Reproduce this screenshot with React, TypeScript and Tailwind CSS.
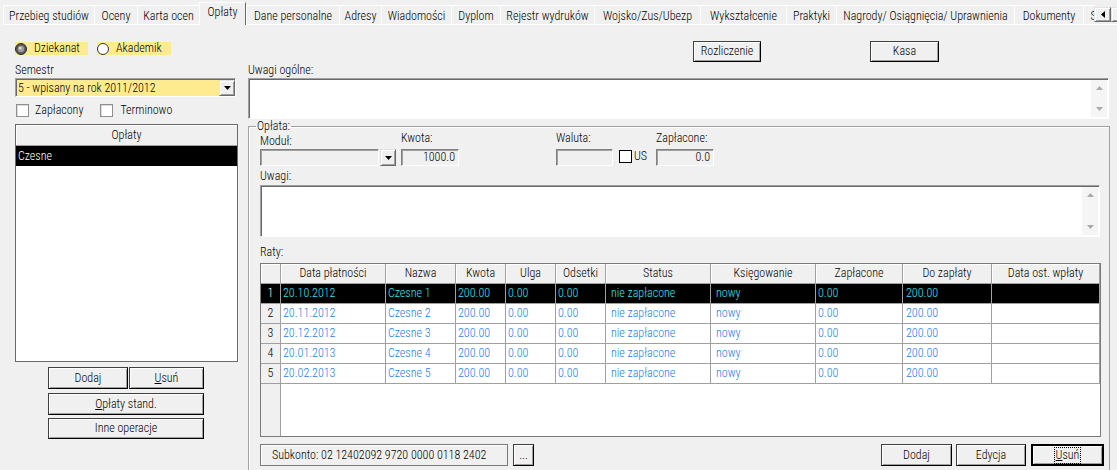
import React from 'react';

type Tab = { label: string; w: string; active?: boolean };

const tabs: Tab[] = [
  { label: 'Przebieg studiów', w: 'w-[91px]' },
  { label: 'Oceny', w: 'w-[43px]' },
  { label: 'Karta ocen', w: 'w-[62px]' },
  { label: 'Opłaty', w: 'w-[47px]', active: true },
  { label: 'Dane personalne', w: 'w-[93px]' },
  { label: 'Adresy', w: 'w-[42px]' },
  { label: 'Wiadomości', w: 'w-[70px]' },
  { label: 'Dyplom', w: 'w-[49px]' },
  { label: 'Rejestr wydruków', w: 'w-[94px]' },
  { label: 'Wojsko/Zus/Ubezp', w: 'w-[106px]' },
  { label: 'Wykształcenie', w: 'w-[86px]' },
  { label: 'Praktyki', w: 'w-[50px]' },
  { label: 'Nagrody/ Osiągnięcia/ Uprawnienia', w: 'w-[178px]' },
  { label: 'Dokumenty', w: 'w-[69px]' },
  { label: 'Stypendia', w: 'w-[60px]' },
];

type Col = { label: string; w: string; pad: string };

const cols: Col[] = [
  { label: 'Data płatności', w: 'w-[105px]', pad: 'pl-[2px]' },
  { label: 'Nazwa', w: 'w-[70px]', pad: 'pl-[2px]' },
  { label: 'Kwota', w: 'w-[50px]', pad: 'pl-[2px]' },
  { label: 'Ulga', w: 'w-[50px]', pad: 'pl-[2px]' },
  { label: 'Odsetki', w: 'w-[50px]', pad: 'pl-[2px]' },
  { label: 'Status', w: 'w-[105px]', pad: 'pl-[5px]' },
  { label: 'Księgowanie', w: 'w-[105px]', pad: 'pl-[5px]' },
  { label: 'Zapłacone', w: 'w-[87px]', pad: 'pl-[2px]' },
  { label: 'Do zapłaty', w: 'w-[89px]', pad: 'pl-[3px]' },
  { label: 'Data ost. wpłaty', w: 'w-[108px]', pad: 'pl-[2px]' },
];

const dates = ['20.10.2012', '20.11.2012', '20.12.2012', '20.01.2013', '20.02.2013'];

const rows = dates.map((d, i) => [
  d,
  'Czesne ' + (i + 1),
  '200.00',
  '0.00',
  '0.00',
  'nie zapłacone',
  'nowy',
  '0.00',
  '200.00',
  '',
]);

function DownArrow({ color = '#000' }: { color?: string }) {
  return (
    <svg width="7" height="4" viewBox="0 0 7 4">
      <path d="M0 0h7L3.5 4z" fill={color} />
    </svg>
  );
}

function UpArrow({ color = '#000' }: { color?: string }) {
  return (
    <svg width="7" height="4" viewBox="0 0 7 4">
      <path d="M0 4h7L3.5 0z" fill={color} />
    </svg>
  );
}

function Btn({ className, children }: { className: string; children: React.ReactNode }) {
  return (
    <button
      className={`flex shrink-0 items-center justify-center whitespace-nowrap border border-[#404040] border-r-black border-b-black bg-[#f0f0f0] leading-[15px] shadow-[inset_1px_1px_0_#fff,inset_-1px_-1px_0_#a0a0a0] ${className}`}
    >
      {children}
    </button>
  );
}

function SmallBtn({ className, children }: { className: string; children: React.ReactNode }) {
  return (
    <div
      className={`flex shrink-0 items-center justify-center border border-t-[#e3e3e3] border-l-[#e3e3e3] border-r-[#696969] border-b-[#696969] bg-[#f0f0f0] shadow-[inset_1px_1px_0_#fff,inset_-1px_-1px_0_#a0a0a0] ${className}`}
    >
      {children}
    </div>
  );
}

function Memo({ className }: { className: string }) {
  return (
    <div
      className={`flex border border-t-[#a0a0a0] border-l-[#a0a0a0] border-r-white border-b-white bg-white shadow-[inset_1px_1px_0_#696969] ${className}`}
    >
      <div className="flex-1" />
      <div className="my-px mr-px flex w-[16px] flex-col justify-between bg-[#f5f5f5]">
        <div className="flex h-[16px] items-center justify-center">
          <UpArrow color="#ababab" />
        </div>
        <div className="flex h-[16px] items-center justify-center">
          <DownArrow color="#ababab" />
        </div>
      </div>
    </div>
  );
}

function Field({ className, children }: { className: string; children?: React.ReactNode }) {
  return (
    <div
      className={`flex h-[17px] items-center justify-end border border-t-[#808080] border-l-[#808080] border-r-white border-b-white bg-[#f0f0f0] pr-[3px] leading-[15px] shadow-[inset_1px_1px_0_#a0a0a0] ${className}`}
    >
      {children}
    </div>
  );
}

function Radio({ checked }: { checked?: boolean }) {
  return (
    <svg width="12" height="12" viewBox="0 0 12 12" className="shrink-0">
      {checked ? (
        <>
          <circle cx="6" cy="6" r="5.5" fill="#5a5a5a" stroke="#2a2a2a" />
          <circle cx="6" cy="6" r="3.2" fill="#9a9a9a" />
          <circle cx="5.2" cy="5.2" r="1.4" fill="#d8d8d8" />
        </>
      ) : (
        <circle cx="6" cy="6" r="5.5" fill="#fff" stroke="#333" />
      )}
    </svg>
  );
}

function CheckBox() {
  return <div className="h-[13px] w-[13px] shrink-0 border border-[#8f8f8f] bg-white shadow-[inset_1px_1px_0_#dcdcdc]" />;
}

function TabStrip() {
  return (
    <div className="flex h-[25px]">
      <div className="flex h-[25px] w-[1094px] shrink-0 items-end overflow-hidden pl-[3px]">
        {tabs.map((t) =>
          t.active ? (
            <div
              key={t.label}
              className={`${t.w} h-[23px] shrink-0 whitespace-nowrap border-t border-l border-white border-r border-r-[#696969] pt-[2px] text-center leading-[15px]`}
            >
              {t.label}
            </div>
          ) : (
            <div
              key={t.label}
              className={`${t.w} h-[20px] shrink-0 overflow-hidden whitespace-nowrap border-t border-l border-b border-white border-r-[#a0a0a0] pt-[3px] text-center leading-[15px]`}
            >
              {t.label}
            </div>
          ),
        )}
      </div>
      <div className="flex flex-1 items-start border-b border-white pt-[7px]">
        <SmallBtn className="h-[15px] w-[17px]">
          <svg width="4" height="7" viewBox="0 0 4 7">
            <path d="M4 0v7L0 3.5z" fill="#000" />
          </svg>
        </SmallBtn>
        <SmallBtn className="h-[15px] w-[17px]">
          <svg width="4" height="7" viewBox="0 0 4 7">
            <path d="M0 0v7L4 3.5z" fill="#000" />
          </svg>
        </SmallBtn>
      </div>
    </div>
  );
}

function LeftPanel() {
  return (
    <div className="w-[248px] shrink-0 pl-[15px] pt-[17px]">
      <div className="flex h-[13px] leading-[13px]">
        <div className="flex w-[73px] items-center bg-[#ffeb8f]">
          <Radio checked />
          <span className="ml-[7px]">Dziekanat</span>
        </div>
        <div className="ml-[9px] flex w-[74px] items-center bg-[#ffeb8f]">
          <Radio />
          <span className="ml-[7px]">Akademik</span>
        </div>
      </div>

      <div className="mt-[8px] leading-[15px]">Semestr</div>
      <div className="flex h-[19px] w-[221px] border border-t-[#a0a0a0] border-l-[#a0a0a0] border-r-white border-b-white shadow-[inset_1px_1px_0_#696969]">
        <div className="mt-px ml-px flex-1 bg-[#ffeb8f] pl-[1px] leading-[16px]">5 - wpisany na rok 2011/2012</div>
        <SmallBtn className="mt-px h-[16px] w-[16px]">
          <DownArrow />
        </SmallBtn>
      </div>

      <div className="mt-[7px] flex h-[13px] items-center leading-[15px]">
        <div className="ml-px flex items-center">
          <CheckBox />
          <span className="ml-[6px]">Zapłacony</span>
        </div>
        <div className="ml-[17px] flex items-center">
          <CheckBox />
          <span className="ml-[7px]">Terminowo</span>
        </div>
      </div>

      <div className="mt-[7px] flex h-[238px] w-[223px] flex-col border border-[#6a6a6a] bg-white">
        <div className="h-[21px] border-b border-[#a0a0a0] bg-[#f0f0f0] text-center leading-[20px] shadow-[inset_1px_1px_0_#fff]">
          Opłaty
        </div>
        <div className="h-[20px] bg-black pl-[2px] leading-[20px] text-white">Czesne</div>
      </div>

      <div className="mt-[5px] ml-[33px] flex flex-col">
        <div className="flex gap-[1px]">
          <Btn className="h-[22px] w-[80px]">Dodaj</Btn>
          <Btn className="h-[22px] w-[75px]">
            <span className="underline">U</span>suń
          </Btn>
        </div>
        <Btn className="mt-[4px] h-[22px] w-[156px]">
          <span className="underline">O</span>płaty stand.
        </Btn>
        <Btn className="mt-[3px] h-[21px] w-[156px]">Inne operacje</Btn>
      </div>
    </div>
  );
}

function RatyGrid() {
  return (
    <div className="flex h-[174px] w-[841px] flex-col border border-[#7b7b7b] bg-white">
      <div className="flex h-[20px] shrink-0 bg-[#f0f0f0]">
        <div className="w-[20px] shrink-0 border-r border-b border-[#a0a0a0] shadow-[inset_1px_1px_0_#fff]" />
        {cols.map((c) => (
          <div
            key={c.label}
            className={`${c.w} shrink-0 whitespace-nowrap border-r border-b border-[#a0a0a0] text-center leading-[18px] shadow-[inset_1px_1px_0_#fff]`}
          >
            {c.label}
          </div>
        ))}
      </div>
      {rows.map((r, i) => {
        const sel = i === 0;
        return (
          <div key={i} className={`flex h-[20px] shrink-0 leading-[18px] ${sel ? 'bg-black text-[#34e2f7]' : 'bg-white text-[#1682ef]'}`}>
            <div
              className={`w-[20px] shrink-0 border-r border-b border-[#a0a0a0] text-center ${sel ? 'bg-black text-white' : 'bg-[#f0f0f0] text-black'}`}
            >
              {i + 1}
            </div>
            {cols.map((c, j) => (
              <div key={c.label} className={`${c.w} ${c.pad} shrink-0 whitespace-nowrap border-r border-b border-[#a0a0a0]`}>
                {r[j]}
              </div>
            ))}
          </div>
        );
      })}
      <div className="flex flex-1">
        <div className="w-[20px] shrink-0 border-r border-[#a0a0a0] bg-[#f0f0f0]" />
        <div className="flex-1 bg-white" />
      </div>
    </div>
  );
}

function RightPanel() {
  return (
    <div className="w-[869px] shrink-0 pt-[16px]">
      <div className="flex h-[21px]">
        <Btn className="ml-[445px] h-[21px] w-[68px]">Rozliczenie</Btn>
        <Btn className="ml-[109px] h-[21px] w-[69px]">Kasa</Btn>
      </div>
      <div className="mt-px leading-[15px]">Uwagi ogólne:</div>
      <Memo className="h-[41px] w-[861px]" />

      <fieldset className="w-[862px] border border-[#a0a0a0] pb-[20px] shadow-[inset_1px_1px_0_#fff]">
        <legend className="ml-[7px] px-[1px] leading-[15px]">Opłata:</legend>
        <div className="pl-[11px]">
          <div className="flex h-[32px] items-end">
            <div className="flex flex-col">
              <div className="mb-px leading-[13px]">Moduł:</div>
              <div className="flex">
                <Field className="w-[119px]" />
                <SmallBtn className="ml-px h-[17px] w-[16px]">
                  <DownArrow />
                </SmallBtn>
              </div>
            </div>
            <div className="ml-[5px] flex flex-col">
              <div className="mb-[4px] leading-[13px]">Kwota:</div>
              <Field className="w-[58px]">1000.0</Field>
            </div>
            <div className="ml-[97px] flex flex-col">
              <div className="mb-[4px] leading-[13px]">Waluta:</div>
              <Field className="w-[57px]" />
            </div>
            <div className="ml-[6px] flex h-[17px] w-[37px] items-start pt-px leading-[13px]">
              <div className="h-[13px] w-[13px] shrink-0 border border-black bg-white" />
              <span className="ml-[2px]">US</span>
            </div>
            <div className="flex flex-col">
              <div className="mb-[4px] leading-[13px]">Zapłacone:</div>
              <Field className="w-[58px]">0.0</Field>
            </div>
          </div>

          <div className="mt-[4px] leading-[13px]">Uwagi:</div>
          <Memo className="mt-[2px] h-[52px] w-[840px]" />

          <div className="mt-[9px] leading-[13px]">Raty:</div>
          <div className="mt-[4px]">
            <RatyGrid />
          </div>

          <div className="mt-[7px] flex h-[22px] leading-[15px]">
            <div className="flex h-[22px] w-[248px] items-center whitespace-nowrap border border-[#7a7a7a] bg-[#f0f0f0] pl-[11px] shadow-[inset_1px_1px_0_#fff]">
              Subkonto: 02 12402092 9720 0000 0118 2402
            </div>
            <Btn className="ml-[5px] h-[22px] w-[21px]">...</Btn>
            <Btn className="ml-[347px] h-[22px] w-[71px]">Dodaj</Btn>
            <Btn className="ml-[4px] h-[22px] w-[70px]">Edycja</Btn>
            <button className="ml-[5px] flex h-[22px] w-[73px] shrink-0 items-center justify-center border-2 border-black bg-[#f0f0f0] leading-[15px] shadow-[inset_1px_1px_0_#fff,inset_-1px_-1px_0_#a0a0a0]">
              <span className="px-[1px] outline outline-1 outline-dotted outline-black">
                <span className="underline">U</span>suń
              </span>
            </button>
          </div>
        </div>
      </fieldset>
    </div>
  );
}

export default function App() {
  return (
    <div className="h-[470px] w-[1117px] overflow-hidden bg-[#f0f0f0] font-['Roboto_Condensed','Liberation_Sans',sans-serif] text-[12px] font-[350] text-black">
      <TabStrip />
      <div className="flex">
        <LeftPanel />
        <RightPanel />
      </div>
    </div>
  );
}
